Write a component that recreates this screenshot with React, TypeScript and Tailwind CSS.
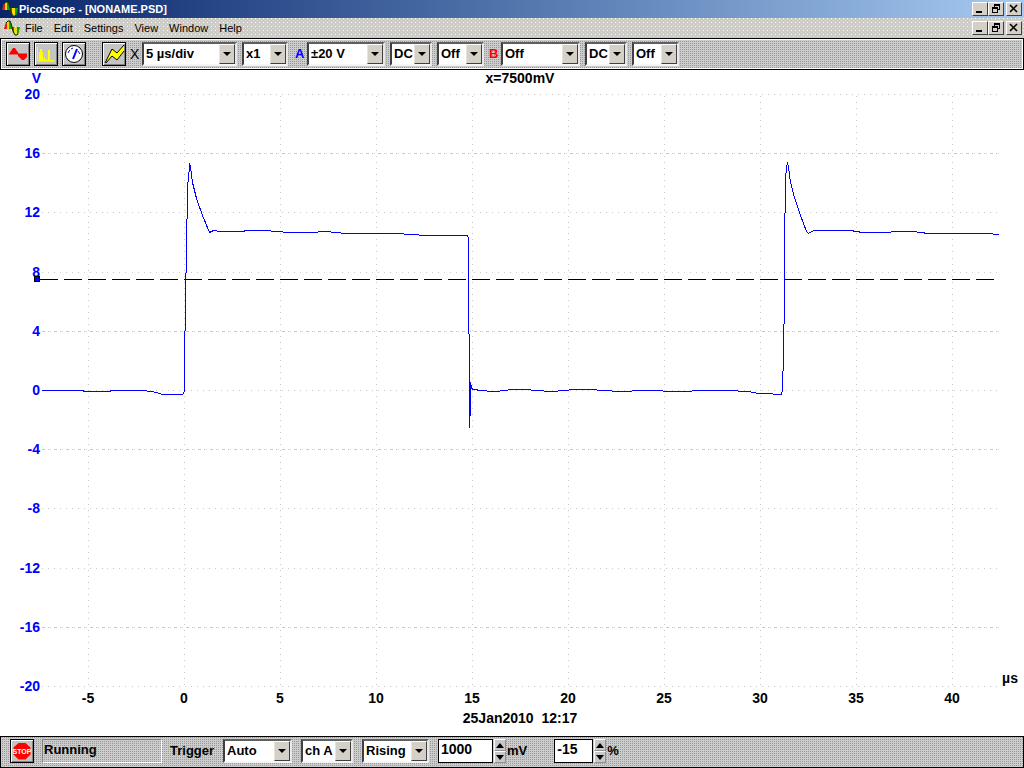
import { useState } from "react";
import type { ReactNode } from "react";

const menus = ["File", "Edit", "Settings", "View", "Window", "Help"];

const voltLabels = [20, 16, 12, 8, 4, 0, -4, -8, -12, -16, -20];
const timeLabels = [-5, 0, 5, 10, 15, 20, 25, 30, 35, 40];

const voltToY = (v: number) => Math.round(390 - v * 14.8);
const timeToX = (t: number) => Math.round(184 + t * 19.2);

const trace: [number, number][] = [
    [41, 390], [62, 390], [82, 390], [84, 391], [108, 391], [112, 390], [142, 390], [150, 391],
    [156, 392], [162, 394], [182, 394], [184, 391], [184, 331], [185, 330], [185, 273], [186, 272],
    [186, 219], [187, 218], [187, 182], [188, 181], [189, 163], [190, 166], [192, 182], [196, 198],
    [202, 215], [209, 232], [213, 230], [220, 231], [242, 231], [246, 230], [265, 230], [276, 231],
    [288, 232], [310, 232], [326, 231], [345, 233], [398, 233], [408, 234], [428, 235], [450, 235],
    [467, 235], [468, 238], [468, 333], [469, 334], [469, 427], [470, 404], [470, 382], [471, 387],
    [472, 389], [476, 389], [478, 390], [495, 391], [512, 389], [526, 389], [534, 390], [552, 391],
    [574, 389], [590, 389], [602, 390], [620, 391], [644, 390], [680, 391], [704, 390], [726, 390],
    [748, 391], [758, 393], [768, 393], [776, 394], [781, 394], [782, 390], [782, 371], [783, 370],
    [783, 324], [784, 323], [784, 213], [785, 212], [785, 179], [786, 166], [787, 163], [788, 166],
    [790, 182], [794, 197], [800, 215], [806, 231], [808, 233], [813, 230], [850, 230], [862, 232],
    [884, 232], [898, 231], [912, 231], [928, 233], [986, 233], [999, 234],
];

const Logo = () => (
    <svg viewBox="0 0 16 16" className="h-4 w-4 shrink-0" aria-hidden="true">
        <path d="M0 9l1-4 1-3h1v7z" fill="#e02010" />
        <path d="M3 9V1h2v8z" fill="#f0e000" />
        <path d="M5 9V1h1l1 2 1 3v3z" fill="#10a010" />
        <path d="M8 7h2v7L8 10z" fill="#e02010" />
        <path d="M10 7h3v8h-2l-1-1z" fill="#f0e000" />
        <path d="M13 7h3l-1 5-1 3h-1z" fill="#10a010" />
        <path d="M2 3l2-2h2l1 2 1 4 1 4 2 4h2l1-1" fill="none" stroke="#103010" />
    </svg>
);

const WindowButton = ({ label, children }: { label: string; children: ReactNode }) => (
    <button
        type="button"
        aria-label={label}
        className="flex h-[14px] w-4 items-center justify-center border border-t-white border-l-white border-r-[#404040] border-b-[#404040] bg-[#d4d0c8]"
    >
        <svg
            viewBox="0 0 10 10"
            className="h-[10px] w-[10px]"
            fill="none"
            stroke="#000"
            shapeRendering="crispEdges"
        >
            {children}
        </svg>
    </button>
);

const WindowButtons = () => (
    <div className="ml-auto flex">
        <WindowButton label="Minimize">
            <path d="M1 8h6" strokeWidth="2" />
        </WindowButton>
        <WindowButton label="Restore">
            <path d="M3 .5h6M3 1.5h6M3.5 0v4M8.5 0v6M7 5.500h2" />
            <path d="M1 3.5h6M1 4.5h6M1.500 3v6M6.500 3v6M1 8.500h6" />
        </WindowButton>
        <span className="w-[2px]" />
        <WindowButton label="Close">
            <path d="M1 1l7 7M8 1L1 8" strokeWidth="1.6" shapeRendering="auto" />
        </WindowButton>
    </div>
);

const ToolButton = ({ label, children }: { label: string; children: ReactNode }) => (
    <button
        type="button"
        aria-label={label}
        className="h-6 w-6 shrink-0 border border-black bg-[#c4c4c4] shadow-[inset_1px_1px_#fff,inset_-1px_-1px_#808080]"
    >
        <svg viewBox="0 0 22 22" className="h-[22px] w-[22px]">
            {children}
        </svg>
    </button>
);

interface PickerProps {
    label: string;
    options: string[];
    className: string;
}

const Picker = ({ label, options, className }: PickerProps) => (
    <div
        className={`grid h-6 shrink-0 items-center border-2 border-t-[#606060] border-l-[#404040] border-r-[#e8e8e8] border-b-[#f4f4f4] bg-white ${className}`}
    >
        <select
            aria-label={label}
            className="col-start-1 row-start-1 h-5 w-full appearance-none bg-transparent pl-[2px] text-[13px] leading-5 font-bold outline-none"
        >
            {options.map((option) => (
                <option key={option}>{option}</option>
            ))}
        </select>
        <span className="pointer-events-none col-start-1 row-start-1 flex h-5 w-4 items-center justify-center justify-self-end border border-t-white border-l-[#e8e4dc] border-r-[#404040] border-b-[#404040] bg-[#d4d0c8]">
            <svg viewBox="0 0 8 4" className="h-1 w-2" aria-hidden="true">
                <path d="M0 0h8L4 4z" />
            </svg>
        </span>
    </div>
);

interface StepperProps {
    label: string;
    initial: number;
    step: number;
    unit: string;
    className: string;
}

const Stepper = ({ label, initial, step, unit, className }: StepperProps) => {
    const [value, setValue] = useState(String(initial));
    const bump = (delta: number) => setValue((prev) => String((Number(prev) || 0) + delta));

    return (
        <div className="flex shrink-0 items-center">
            <input
                type="text"
                aria-label={label}
                value={value}
                onChange={(e) => setValue(e.target.value)}
                className={`h-6 border border-black bg-white pb-1 pl-[2px] text-[14px] font-bold outline-none ${className}`}
            />
            <div className="ml-px flex flex-col">
                {[step, -step].map((delta) => (
                    <button
                        key={delta}
                        type="button"
                        aria-label={`${delta > 0 ? "Increase" : "Decrease"} ${label}`}
                        onClick={() => bump(delta)}
                        className="flex h-3 w-3 items-center justify-center border border-t-white border-l-white border-r-[#909090] border-b-[#909090] bg-[#c8c8c8]"
                    >
                        <svg viewBox="0 0 8 5" className="h-[5px] w-2 shrink-0">
                            <path d={delta > 0 ? "M0 5h8L4 0z" : "M0 0h8L4 5z"} />
                        </svg>
                    </button>
                ))}
            </div>
            <span className="ml-px">{unit}</span>
        </div>
    );
};

const Scope = () => (
    <svg
        viewBox="0 70 1024 666"
        className="block h-auto w-full bg-white text-[14px] font-bold"
        role="img"
        aria-label="Channel A trace"
    >
        <g transform="translate(.5 .5)" fill="none" shapeRendering="crispEdges">
            <g stroke="#c8c8c8">
                {voltLabels.map((v) => (
                    <path
                        key={v}
                        d={`M41 ${voltToY(v)}H998`}
                        strokeDasharray={[16, 4, -4, -16].includes(v) ? "3 3 1 1 1 3" : "1 5"}
                    />
                ))}
                {timeLabels.map((t) => (
                    <path key={t} d={`M${timeToX(t)} 95V687`} strokeDasharray="1 5" />
                ))}
            </g>
            <path d="M39.5 279H995" stroke="#000" strokeDasharray="18 6" />
            <polyline points={trace.map((p) => p.join(",")).join(" ")} stroke="#00f" />
        </g>

        <g fill="#00f" textAnchor="end">
            <text x="41" y="83">V</text>
            {voltLabels.map((v) => (
                <text key={v} x="40" y={voltToY(v) + 5}>
                    {v}
                </text>
            ))}
        </g>
        <rect
            x="34.5"
            y="276.5"
            width="5"
            height="5"
            fill="#00f"
            stroke="#000"
            shapeRendering="crispEdges"
        />

        <g textAnchor="middle">
            <text x="520" y="83">x=7500mV</text>
            {timeLabels.map((t) => (
                <text key={t} x={timeToX(t)} y="703">
                    {t}
                </text>
            ))}
            <text x="1010" y="683">µs</text>
            <text x="520" y="723" className="whitespace-pre">
                {"25Jan2010  12:17"}
            </text>
        </g>
    </svg>
);

export default function App() {
    return (
        <div className="flex min-h-screen flex-col bg-white font-['Liberation_Sans',Arial,sans-serif] text-black">
            <header className="flex h-[18px] items-center bg-linear-to-r from-[#0a246a] to-[#a6caf0] pr-[2px] pl-[2px]">
                <Logo />
                <h1 className="ml-px text-[11px] leading-4 font-bold whitespace-nowrap text-white">
                    PicoScope - [NONAME.PSD]
                </h1>
                <WindowButtons />
            </header>

            <nav className="flex h-5 items-center bg-[#ceccc6] bg-[conic-gradient(from_0deg_at_3px_1px,#ffffcc_25%,transparent_0),conic-gradient(from_0deg_at_3px_1px,#ffcccc_25%,transparent_0)] bg-[length:4px_4px] bg-[position:0_0,2px_2px] pr-[2px] pl-1">
                <Logo />
                <div className="ml-[5px] flex gap-[11px] text-[11px] leading-4">
                    {menus.map((menu) => (
                        <button key={menu} type="button">
                            {menu}
                        </button>
                    ))}
                </div>
                <WindowButtons />
            </nav>

            <div className="flex h-8 items-center border border-black bg-[conic-gradient(#999_25%,#ccc_0)] bg-[length:2px_2px] pl-[5px] text-[13px] font-bold shadow-[inset_0_0_0_1px_#fff]">
                <div className="flex gap-1">
                    <ToolButton label="Oscilloscope">
                        <path d="M2 11l4-6h2l4 6z" fill="#f00" />
                        <path d="M11 11h9v3l-3 3h-2l-4-4z" fill="#f00" />
                        <path d="M2 11h18" stroke="#f00" />
                    </ToolButton>
                    <ToolButton label="Spectrum analyser">
                        <path d="M2.500 4v14H20" fill="none" stroke="#ff0" />
                        <path d="M4 18V9h1V6h2v3h1v7h1v-2h1v2h1v1h2V7h2v10h4v1z" fill="#ff0" />
                    </ToolButton>
                    <ToolButton label="Meter">
                        <circle cx="11" cy="11" r="8.500" fill="#fff" stroke="#000" />
                        <path d="M5 10l1-2 1-1M8 6l2-1M15 8l2 3" stroke="#00f" fill="none" />
                        <path d="M10 16l4-10" stroke="#00f" strokeWidth="2" />
                    </ToolButton>
                </div>
                <div className="ml-4 flex">
                    <ToolButton label="New trace">
                        <path d="M2 20l7-14 5 3 7-7v6l-7 9-5-4z" fill="#ff0" />
                        <path d="M2 20L9 6l5 4 7-8M3 20l6-7 5 4 7-9" fill="none" stroke="#000" />
                    </ToolButton>
                </div>
                <span className="ml-1 w-3 text-[14px] leading-5 font-normal">X</span>
                <Picker label="Timebase" options={["5 µs/div", "10 µs/div", "20 µs/div"]} className="w-[95px]" />
                <Picker label="Multiplier" options={["x1", "x2", "x5"]} className="ml-[5px] w-[46px]" />
                <span className="ml-[7px] w-3 text-[#00f]">A</span>
                <Picker label="Channel A range" options={["±20 V", "±10 V", "±5 V"]} className="w-[78px]" />
                <Picker label="Channel A coupling" options={["DC", "AC"]} className="ml-[5px] w-[42px]" />
                <Picker label="Channel A scaling" options={["Off", "On"]} className="ml-[5px] w-[47px]" />
                <span className="ml-[5px] w-3 text-[#f00]">B</span>
                <Picker label="Channel B range" options={["Off", "±20 V", "±10 V"]} className="w-[79px]" />
                <Picker label="Channel B coupling" options={["DC", "AC"]} className="ml-[5px] w-[42px]" />
                <Picker label="Channel B scaling" options={["Off", "On"]} className="ml-[5px] w-[47px]" />
            </div>

            <main className="flex-1">
                <Scope />
            </main>

            <footer className="flex h-8 items-center border border-black bg-[conic-gradient(#999_25%,#ccc_0)] bg-[length:2px_2px] pb-[2px] pl-[9px] text-[13px] font-bold">
                <ToolButton label="Stop">
                    <path d="M7.500 3h7L19.500 7.500v7L14.500 19.500h-7L2.500 14.500v-7z" fill="#f00" />
                    <text
                        x="11"
                        y="14"
                        textAnchor="middle"
                        fill="#fff"
                        className="text-[7px] font-bold"
                    >
                        STOP
                    </text>
                </ToolButton>
                <output className="ml-2 h-6 w-[120px] border border-t-[#808080] border-l-[#808080] border-r-white border-b-white pl-px leading-5">
                    Running
                </output>
                <span className="ml-2 w-[53px]">Trigger</span>
                <Picker label="Trigger mode" options={["Auto", "None", "Repeat", "Single"]} className="w-[69px]" />
                <Picker label="Trigger channel" options={["ch A", "ch B"]} className="ml-[9px] w-[52px]" />
                <Picker label="Trigger edge" options={["Rising", "Falling"]} className="ml-[9px] w-[67px]" />
                <div className="ml-[9px] flex gap-[27px]">
                    <Stepper label="threshold" initial={1000} step={100} unit="mV" className="w-[55px]" />
                    <Stepper label="delay" initial={-15} step={1} unit="%" className="w-[39px]" />
                </div>
            </footer>
        </div>
    );
}
